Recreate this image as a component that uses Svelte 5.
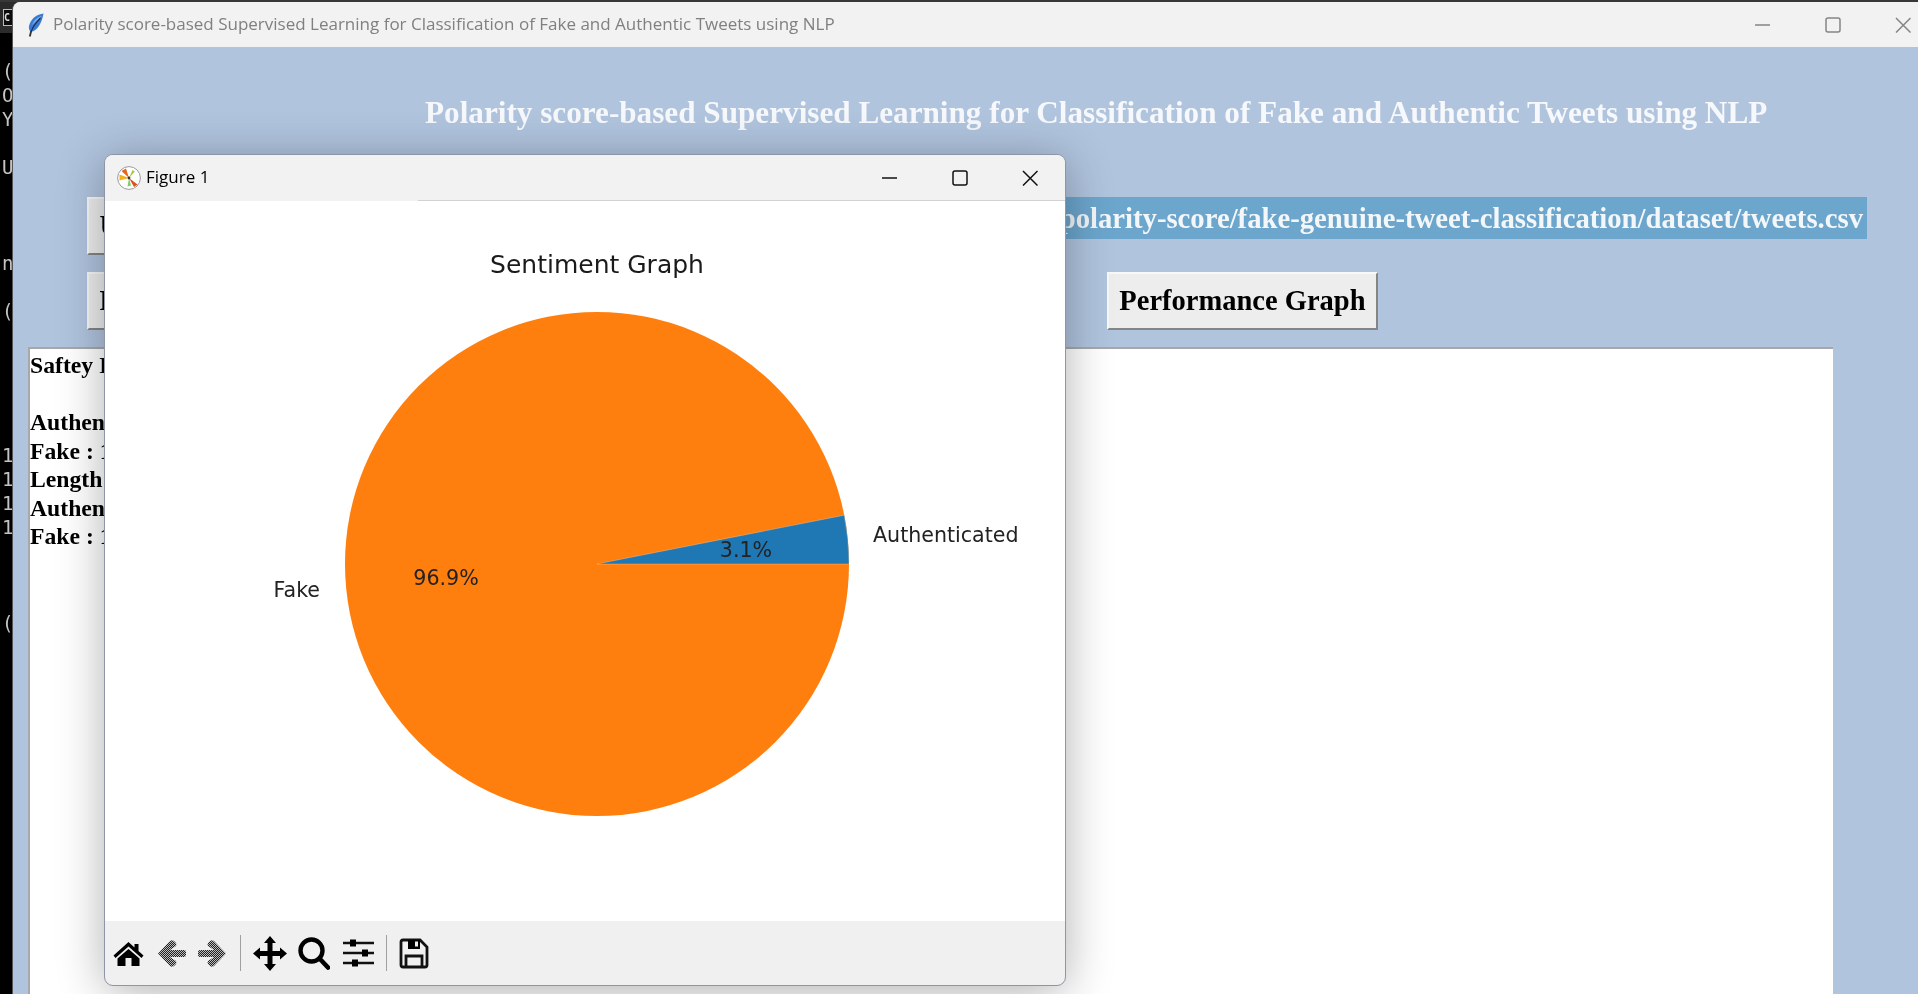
<script>
  // terminal lines peeking out from behind the app window (24px pitch, blanks kept)
  const terminalLines = ['(', 'O', 'Y', '', 'U', '', '', '', 'n', '', '(', '', '', '', '', '', '1', '1', '1', '1', '', '', '', '('];

  const resultLines = ['Saftey Index', '', 'Authenticated : 1', 'Fake : 1', 'Length : 1', 'Authenticated : 1', 'Fake : 1'];

  const cx = 492;
  const cy = 363;
  const r = 252;
  const authShare = 3.1;
  const angle = (authShare / 100) * 2 * Math.PI;
  const wedge = `M${cx} ${cy} L${cx + r} ${cy} A${r} ${r} 0 0 0 ${cx + r * Math.cos(angle)} ${cy - r * Math.sin(angle)} Z`;
</script>

<div class="desktop">
  <div class="terminal">
    <div class="term-head"><span class="term-icon">C</span></div>
    <div class="term-lines">
      {#each terminalLines as line}
        <div class="term-line">{line}</div>
      {/each}
    </div>
  </div>

  <section class="app-window">
    <header class="app-title">
      <svg class="feather" viewBox="0 0 17 24" width="17" height="24">
        <path d="M16.5 0.5 C10 1 3.5 6 2 13 C1.5 16 2.5 18 4 19 C10 18 15 10 16.5 0.5 Z" fill="#3c7bd2" />
        <path d="M15 3 C12 3.5 7 7 5 12 C8 9 11 6 15 3 Z" fill="#86b4ea" />
        <path d="M13.5 5 C9.5 9 6 13 4 19" stroke="#12305c" stroke-width="1.1" fill="none" />
        <path d="M4.2 18 L2.8 23.5" stroke="#333" stroke-width="1.8" />
      </svg>
      <span class="app-title-text">Polarity score-based Supervised Learning for Classification of Fake and Authentic Tweets using NLP</span>
      <div class="controls dim">
        <span class="ctl"><svg viewBox="0 0 16 16" width="16" height="16"><path d="M0 8 H15" /></svg></span>
        <span class="ctl"><svg viewBox="0 0 16 16" width="16" height="16"><rect x="1" y="1" width="14" height="14" rx="2" /></svg></span>
        <span class="ctl"><svg viewBox="0 0 16 16" width="16" height="16"><path d="M1 1 L15.5 15.5 M15.5 1 L1 15.5" /></svg></span>
      </div>
    </header>

    <div class="app-body">
      <h1 class="heading">Polarity score-based Supervised Learning for Classification of Fake and Authentic Tweets using NLP</h1>

      <div class="row">
        <button class="tk-btn">Upload Tweets Dataset</button>
        <div class="path-label">E:/polarity-score/fake-genuine-tweet-classification/dataset/tweets.csv</div>
      </div>

      <div class="row row-actions">
        <button class="tk-btn">Preprocess</button>
        <button class="tk-btn push">Performance Graph</button>
      </div>

      <div class="output">
        {#each resultLines as line}
          <div class="output-line">{line}</div>
        {/each}
      </div>
    </div>
  </section>

  <section class="figure">
    <header class="fig-title">
      <svg class="fig-logo" viewBox="0 0 24 24" width="24" height="24">
        <circle cx="12" cy="12" r="11.4" fill="#fff" stroke="#9a9a9a" />
        <path d="M12 12 L4.5 5 L9 2.5 Z" fill="#e8641a" />
        <path d="M12 12 L2.5 8.5 L2.5 14.5 Z" fill="#f2b01e" />
        <path d="M12 12 L20.5 18.5 L17 21 Z" fill="#d9541a" />
        <path d="M12 12 L18 5.5 L15.5 4 Z" fill="#a8cc3c" />
        <path d="M12 12 L10.5 20.5 L14 19.5 Z" fill="#7ccb6a" />
        <circle cx="12" cy="12" r="1.4" fill="#333" />
      </svg>
      <span class="fig-title-text">Figure 1</span>
      <div class="controls">
        <span class="ctl"><svg viewBox="0 0 16 16" width="16" height="16"><path d="M0 8 H15" /></svg></span>
        <span class="ctl"><svg viewBox="0 0 16 16" width="16" height="16"><rect x="1" y="1" width="14" height="14" rx="2" /></svg></span>
        <span class="ctl"><svg viewBox="0 0 16 16" width="16" height="16"><path d="M1 1 L15.5 15.5 M15.5 1 L1 15.5" /></svg></span>
      </div>
    </header>

    <svg class="canvas" viewBox="0 0 960 720" width="960" height="720">
      <text class="plot-title" x="492" y="72" text-anchor="middle">Sentiment Graph</text>
      <circle {cx} {cy} {r} fill="#ff7f0e" />
      <path d={wedge} fill="#1f77b4" stroke="#fff" stroke-opacity="0.35" stroke-width="0.7" />
      <text class="plot-label" x="641" y="356" text-anchor="middle" fill="#111">3.1%</text>
      <text class="plot-label" x="341" y="384" text-anchor="middle" fill="#111">96.9%</text>
      <text class="plot-label" x="768" y="341">Authenticated</text>
      <text class="plot-label" x="215" y="396" text-anchor="end">Fake</text>
    </svg>

    <footer class="toolbar">
      <svg class="tool" style="margin-left:8px" viewBox="0 0 30 25" width="31" height="25">
        <path d="M15 1 L21 6.5 V3 H25 V10 L30 14.5 L28 17 L15 5.5 L2 17 L0 14.5 Z M15 8 L26 17.5 V25 H18 V17 H12 V25 H4 V17.5 Z" />
      </svg>
      <svg class="tool" style="margin-left:14px" viewBox="0 0 28 29" width="28" height="29">
        <defs>
          <pattern id="dither" width="2" height="2" patternUnits="userSpaceOnUse">
            <rect width="1" height="1" fill="#222" />
            <rect x="1" y="1" width="1" height="1" fill="#222" />
            <rect x="1" width="1" height="1" fill="#bbb" />
            <rect y="1" width="1" height="1" fill="#bbb" />
          </pattern>
        </defs>
        <path fill="url(#dither)" d="M0 14.5 L12 2 Q14 0.5 16 2 L18 4 Q19 6 18 7 L12 11 H26 Q28 11 28 13 V16 Q28 18 26 18 H12 L18 22 Q19 24 18 25 L16 27 Q14 28.5 12 27 Z" />
      </svg>
      <svg class="tool" style="margin-left:12px" viewBox="0 0 28 29" width="28" height="29">
        <path fill="url(#dither)" d="M28 14.5 L16 2 Q14 0.5 12 2 L10 4 Q9 6 10 7 L16 11 H2 Q0 11 0 13 V16 Q0 18 2 18 H16 L10 22 Q9 24 10 25 L12 27 Q14 28.5 16 27 Z" />
      </svg>
      <span class="sep" style="margin-left:14px"></span>
      <svg class="tool" style="margin-left:12px" viewBox="0 0 34 35" width="34" height="35">
        <path d="M17 0 L23 7 H19.5 V15 H27 V11.5 L34 17.5 L27 23.5 V20 H19.5 V28 H23 L17 35 L11 28 H14.5 V20 H7 V23.5 L0 17.5 L7 11.5 V15 H14.5 V7 H11 Z" />
      </svg>
      <svg class="tool" style="margin-left:11px" viewBox="0 0 32 33" width="32" height="33">
        <circle cx="13.5" cy="13.5" r="11" fill="none" stroke="#000" stroke-width="4.4" />
        <path d="M21.5 21.5 L30 30.5" stroke="#000" stroke-width="4.6" stroke-linecap="round" fill="none" />
      </svg>
      <svg class="tool" style="margin-left:13px" viewBox="0 0 31 28" width="31" height="28">
        <path d="M0 4 H31 M0 14 H31 M0 24 H31" stroke="#111" stroke-width="2.4" fill="none" />
        <rect x="7" y="0.5" width="6" height="7" />
        <rect x="19" y="10.5" width="6" height="7" />
        <rect x="9" y="20.5" width="6" height="7" />
      </svg>
      <span class="sep" style="margin-left:12px"></span>
      <svg class="tool" style="margin-left:12px" viewBox="0 0 30 31" width="30" height="31">
        <path d="M2 4 Q2 2 4 2 H21 L28 9 V27 Q28 29 26 29 H4 Q2 29 2 27 Z" fill="none" stroke="#111" stroke-width="2.8" />
        <path d="M9 2 H21 V11 H9 Z" />
        <rect x="16" y="3.5" width="3" height="5" fill="#f0f0f0" />
        <path d="M7 29 V18 H23 V29" fill="none" stroke="#111" stroke-width="2.8" />
      </svg>
    </footer>
  </section>
</div>

<style>
  :global(body) {
    margin: 0;
    overflow: hidden;
  }

  /* the reference is a slightly soft upscaled capture */
  .desktop {
    position: relative;
    width: 1918px;
    height: 994px;
    background: #000;
    overflow: hidden;
    border-top: 2px solid #383838;
    box-sizing: border-box;
    filter: blur(0.45px);
  }

  .term-head {
    height: 31px;
    background: #2b2b2b;
    display: flex;
    align-items: center;
    padding-left: 3px;
  }

  .term-icon {
    width: 9px;
    height: 15px;
    background: #0c0c0c;
    border: 1px solid #bbb;
    color: #ddd;
    font: bold 10px/15px "DejaVu Sans Mono", monospace;
    overflow: hidden;
  }

  .term-lines {
    padding: 26px 0 0 2px;
  }

  .term-line {
    height: 24px;
    font: 19px/24px "DejaVu Sans Mono", monospace;
    color: #c4c4c4;
  }

  .app-window {
    position: absolute;
    left: 12px;
    top: 0;
    width: 1926px;
    height: 992px;
    background: #b0c4de;
    border-top-left-radius: 8px;
    border-left: 1px solid #555;
    box-sizing: border-box;
    overflow: hidden;
    display: flex;
    flex-direction: column;
  }

  .app-title {
    flex: none;
    height: 45px;
    background: #f2f2f2;
    display: flex;
    align-items: center;
    padding-left: 14px;
  }

  .app-title-text {
    margin-left: 9px;
    padding-bottom: 2px;
    font: 17px "Open Sans", sans-serif;
    color: #808080;
    white-space: nowrap;
  }

  .controls {
    margin-left: auto;
    display: flex;
    height: 100%;
  }

  .ctl {
    width: 70px;
    display: flex;
    align-items: center;
    justify-content: center;
  }

  .ctl svg {
    fill: none;
    stroke: #111;
    stroke-width: 1.5;
  }

  .dim .ctl svg {
    stroke: #858585;
  }

  .app-body {
    flex: 1;
    min-height: 0;
    display: flex;
    flex-direction: column;
    gap: 17px;
  }

  .heading {
    margin: 49px 0 50px 412px;
    height: 34px;
    font: bold 31.2px/34px "Liberation Serif", serif;
    color: #f6f8fb;
    white-space: nowrap;
  }

  .row {
    display: flex;
    align-items: flex-start;
    padding: 0 71px 0 74px;
  }

  .row-actions {
    padding-right: 560px;
  }

  .tk-btn {
    height: 58px;
    padding: 0 10.5px;
    background: #ededed;
    border: 2px solid;
    border-color: #f8f8f8 #858585 #858585 #f8f8f8;
    font: bold 28.5px "Liberation Serif", serif;
    color: #000;
    white-space: nowrap;
  }

  .push {
    margin-left: auto;
  }

  .path-label {
    margin-left: auto;
    height: 42px;
    padding: 0 4px;
    background: #6ca6cd;
    font: bold 28.7px/42px "Liberation Serif", serif;
    color: #f4f7fa;
    white-space: nowrap;
  }

  .output {
    flex: 1;
    margin: 0 105px 0 15px;
    padding: 2px 0;
    background: #fff;
    border-top: 2px solid #a8a8a8;
    border-left: 2px solid #a8a8a8;
  }

  .output-line {
    height: 28.5px;
    font: bold 23.7px/28.5px "Liberation Serif", serif;
    color: #000;
    white-space: nowrap;
  }

  .figure {
    position: absolute;
    left: 105px;
    top: 153px;
    width: 960px;
    height: 830px;
    background: #fff;
    border-radius: 8px;
    overflow: hidden;
    outline: 1px solid #8d96a6;
    box-shadow: 0 6px 48px rgba(0, 0, 0, 0.32);
  }

  .fig-title {
    position: relative;
    height: 46px;
    background: #f2f2f2;
    display: flex;
    align-items: center;
    padding-left: 12px;
    box-sizing: border-box;
  }

  .fig-title::after {
    content: "";
    position: absolute;
    left: 313px;
    right: 0;
    bottom: 0;
    height: 1px;
    background: #d2d2d2;
  }

  .fig-title-text {
    margin-left: 5px;
    padding-bottom: 3px;
    font: 17px "Open Sans", sans-serif;
    color: #000;
  }

  .canvas {
    display: block;
  }

  .plot-title {
    font: 25px "DejaVu Sans", sans-serif;
    fill: #1a1a1a;
  }

  .plot-label {
    font: 20.6px "DejaVu Sans", sans-serif;
    fill: #222;
  }

  .toolbar {
    height: 64px;
    background: #f0f0f0;
    display: flex;
    align-items: center;
  }

  .tool {
    flex: none;
    fill: #000;
  }

  .sep {
    flex: none;
    width: 1px;
    height: 36px;
    background: #a0a0a0;
  }
</style>
